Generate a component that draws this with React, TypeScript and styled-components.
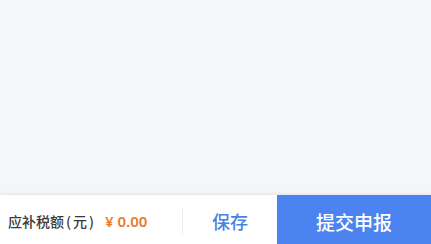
import styled, { createGlobalStyle } from "styled-components";

const GlobalStyle = createGlobalStyle`
  html, body {
    margin: 0;
    padding: 0;
    height: 100%;
  }
  body {
    background: #f5f6fa;
    font-family: "Noto Sans CJK SC", "Noto Sans", sans-serif;
  }
  #root {
    height: 100%;
  }
`;

export default function App() {
  return (
    <>
      <GlobalStyle />
      <Page>
        <Content />
        <BottomBar>
          <Summary>
            <Label>
              应补税额<Paren>(</Paren>元<Paren>)</Paren>
            </Label>
            <Amount>¥ 0.00</Amount>
          </Summary>
          <Divider />
          <SaveButton>保存</SaveButton>
          <SubmitButton>提交申报</SubmitButton>
        </BottomBar>
      </Page>
    </>
  );
}

const Page = styled.div`
  display: flex;
  flex-direction: column;
  height: 244px;
  width: 431px;
`;

const Content = styled.div`
  flex: 1;
  background: #f5f6fa;
`;

const BottomBar = styled.div`
  display: flex;
  align-items: center;
  height: 49px;
  background: #fff;
  box-shadow: 0 -1px 4px rgba(0, 0, 0, 0.08);
`;

const Summary = styled.div`
  display: flex;
  align-items: center;
  gap: 9px;
  padding: 3px 0 0 8px;
  width: 182px;
  box-sizing: border-box;
`;

const Label = styled.span`
  font-size: 14px;
  font-weight: 500;
  color: #3a3a3a;
`;

const Paren = styled.span`
  margin: 0 2px;
`;

const Amount = styled.span`
  font-size: 15px;
  font-weight: 600;
  color: #e8782f;
  font-family: "Noto Sans", sans-serif;
`;

const Divider = styled.div`
  width: 1px;
  height: 27px;
  margin-top: 3px;
  background: #ececec;
`;

const SaveButton = styled.div`
  width: 94px;
  padding-top: 3px;
  text-align: center;
  font-size: 18px;
  color: #4a7fe4;
  font-weight: 500;
`;

const SubmitButton = styled.div`
  flex: 1;
  align-self: stretch;
  display: flex;
  align-items: center;
  justify-content: center;
  padding-top: 3px;
  background: #4b83f1;
  color: #fff;
  font-size: 19px;
  font-weight: 500;
`;
